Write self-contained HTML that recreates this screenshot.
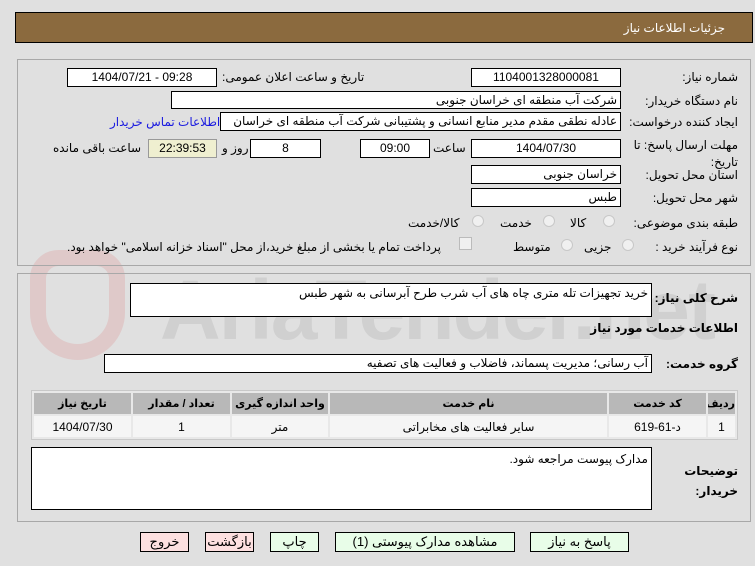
<!DOCTYPE html>
<html><head><meta charset="utf-8"><style>
body{margin:0;width:755px;height:566px;background:#e0e0e0;font-family:"Liberation Sans","DejaVu Sans",sans-serif;font-size:12px;color:#000;position:relative;overflow:hidden;direction:rtl}
.a{position:absolute;white-space:nowrap}
.box{position:absolute;background:#fff;border:1px solid #000;box-sizing:border-box;white-space:nowrap;overflow:hidden;line-height:16px;padding:0 3px}
.c{text-align:center}
.r{text-align:right}
.lbl{position:absolute;white-space:nowrap;right:17px}
.panel{position:absolute;border:1px solid #a8a8a8;box-sizing:border-box}
.btn{position:absolute;border:1px solid #000;box-sizing:border-box;text-align:center;line-height:17px;font-size:13px;height:20px;top:532px}
.rad{position:absolute;width:12px;height:12px;border-radius:50%;border:1px solid #c8c8c8;background:#f0f0f0;box-sizing:border-box}
table{border-collapse:separate;border-spacing:2px;position:absolute;left:31px;top:390px;width:707px;background:#e8e8e8;border:1px solid #c8c8c8;table-layout:fixed}
td{text-align:center;height:21px;padding:0;font-size:12px;white-space:nowrap;overflow:hidden}
.h td{background:#b8b8b8;font-weight:bold;font-size:11px}
.d td{background:#f5f5f5}
</style></head><body>
<div class="a" style="left:15px;top:12px;width:738px;height:31px;background:#8b6a3e;border:1px solid #000;box-sizing:border-box"></div>
<div class="a" style="right:30px;top:21px;color:#fff;font-size:12px">جزئیات اطلاعات نیاز</div>

<div class="a" style="left:160px;top:262px;font-size:84px;font-weight:bold;color:rgba(150,150,150,0.22);direction:ltr;letter-spacing:-2px">AriaTender.net</div>
<div class="a" style="left:30px;top:250px;width:95px;height:110px;border:16px solid rgba(220,120,120,0.22);border-radius:30px 30px 50px 50px;box-sizing:border-box"></div>

<div class="panel" style="left:17px;top:59px;width:734px;height:207px"></div>
<div class="lbl" style="top:70px">شماره نیاز:</div>
<div class="box c" style="left:471px;top:68px;width:150px;height:19px">1104001328000081</div>
<div class="a" style="left:222px;top:70px">تاریخ و ساعت اعلان عمومی:</div>
<div class="box c" style="left:67px;top:68px;width:150px;height:19px;direction:ltr">1404/07/21 - 09:28</div>
<div class="lbl" style="top:94px">نام دستگاه خریدار:</div>
<div class="box r" style="left:171px;top:91px;width:450px;height:18px">شرکت آب منطقه ای خراسان جنوبی</div>
<div class="lbl" style="top:115px">ایجاد کننده درخواست:</div>
<div class="box r" style="left:220px;top:112px;width:401px;height:19px">عادله نطقی مقدم مدیر منابع انسانی و پشتیبانی شرکت آب منطقه ای خراسان</div>
<div class="a" style="left:110px;top:115px;color:#1a1ae0">اطلاعات تماس خریدار</div>
<div class="lbl" style="top:137px;line-height:17px;width:105px;white-space:normal;text-align:right">مهلت ارسال پاسخ: تا تاریخ:</div>
<div class="box c" style="left:471px;top:139px;width:150px;height:19px">1404/07/30</div>
<div class="a" style="left:433px;top:141px">ساعت</div>
<div class="box c" style="left:360px;top:139px;width:70px;height:19px">09:00</div>
<div class="box c" style="left:250px;top:139px;width:71px;height:19px">8</div>
<div class="a" style="left:222px;top:141px">روز و</div>
<div class="box c" style="left:148px;top:139px;width:69px;height:19px;background:#efefd0;border-color:#999">22:39:53</div>
<div class="a" style="left:53px;top:141px">ساعت باقی مانده</div>
<div class="lbl" style="top:168px">استان محل تحویل:</div>
<div class="box r" style="left:471px;top:165px;width:150px;height:19px">خراسان جنوبی</div>
<div class="lbl" style="top:191px">شهر محل تحویل:</div>
<div class="box r" style="left:471px;top:188px;width:150px;height:19px">طبس</div>
<div class="lbl" style="top:216px">طبقه بندی موضوعی:</div>
<div class="rad" style="left:603px;top:215px"></div><div class="a" style="left:570px;top:216px">کالا</div>
<div class="rad" style="left:543px;top:215px"></div><div class="a" style="left:500px;top:216px">خدمت</div>
<div class="rad" style="left:472px;top:215px"></div><div class="a" style="left:408px;top:216px">کالا/خدمت</div>
<div class="lbl" style="top:240px">نوع فرآیند خرید :</div>
<div class="rad" style="left:622px;top:239px"></div><div class="a" style="left:584px;top:240px">جزیی</div>
<div class="rad" style="left:561px;top:239px"></div><div class="a" style="left:513px;top:240px">متوسط</div>
<div class="a" style="left:459px;top:237px;width:13px;height:13px;border:1px solid #bbb;background:#f0f0f0;box-sizing:border-box"></div>
<div class="a" style="left:67px;top:240px">پرداخت تمام یا بخشی از مبلغ خرید،از محل "اسناد خزانه اسلامی" خواهد بود.</div>

<div class="panel" style="left:17px;top:273px;width:734px;height:249px"></div>
<div class="lbl" style="top:291px;font-weight:bold;font-size:12px">شرح کلی نیاز:</div>
<div class="box r" style="left:130px;top:283px;width:522px;height:34px;line-height:18px">خرید تجهیزات تله متری چاه های آب شرب طرح آبرسانی به شهر طبس</div>
<div class="lbl" style="top:321px;font-weight:bold;font-size:12px">اطلاعات خدمات مورد نیاز</div>
<div class="lbl" style="top:357px;font-weight:bold;font-size:12px">گروه خدمت:</div>
<div class="box r" style="left:104px;top:354px;width:548px;height:19px">آب رسانی؛ مدیریت پسماند، فاضلاب و فعالیت های تصفیه</div>
<table>
<colgroup><col style="width:27px"><col style="width:97px"><col><col style="width:96px"><col style="width:97px"><col style="width:97px"></colgroup>
<tr class="h"><td>ردیف</td><td>کد خدمت</td><td>نام خدمت</td><td>واحد اندازه گیری</td><td>تعداد / مقدار</td><td>تاریخ نیاز</td></tr>
<tr class="d"><td>1</td><td>د-61-619</td><td>سایر فعالیت های مخابراتی</td><td>متر</td><td>1</td><td>1404/07/30</td></tr>
</table>
<div class="lbl" style="top:461px;font-weight:bold;font-size:12px;line-height:20px;width:60px;white-space:normal;text-align:right">توضیحات خریدار:</div>
<div class="box r" style="left:31px;top:447px;width:621px;height:63px;padding-top:3px">مدارک پیوست مراجعه شود.</div>

<div class="btn" style="left:530px;width:99px;background:#e8fde8">پاسخ به نیاز</div>
<div class="btn" style="left:335px;width:180px;background:#e8fde8">مشاهده مدارک پیوستی (1)</div>
<div class="btn" style="left:270px;width:49px;background:#e8fde8">چاپ</div>
<div class="btn" style="left:205px;width:49px;background:#fde0e0">بازگشت</div>
<div class="btn" style="left:140px;width:49px;background:#fde0e0">خروج</div>
</body></html>
